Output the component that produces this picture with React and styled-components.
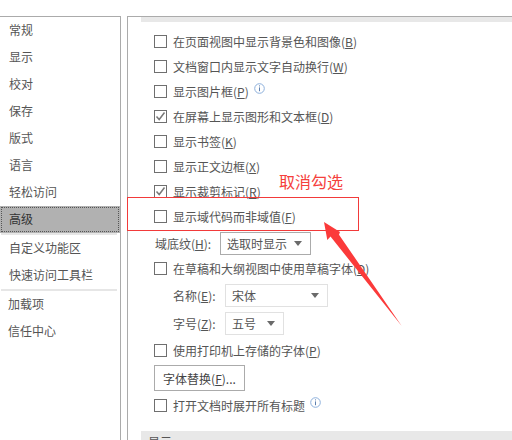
import React from "react";
import styled, {createGlobalStyle} from "styled-components";

const navGroups = [
  ["常规", "显示", "校对", "保存", "版式", "语言", "轻松访问", "高级"],
  ["自定义功能区", "快速访问工具栏"],
  ["加载项", "信任中心"]
];

const topOptions = [
  {label: "在页面视图中显示背景色和图像", hot: "B"},
  {label: "文档窗口内显示文字自动换行", hot: "W"},
  {label: "显示图片框", hot: "P", info: true},
  {label: "在屏幕上显示图形和文本框", hot: "D", checked: true},
  {label: "显示书签", hot: "K"},
  {label: "显示正文边框", hot: "X"},
  {label: "显示裁剪标记", hot: "R", checked: true},
  {label: "显示域代码而非域值", hot: "F"}
];

const App = () => (
  <Page>
    <GlobalStyle />
    <Sidebar>
      {navGroups.map((group, i) => (
        <NavGroup key={i} last={i === navGroups.length - 1}>
          {group.map(item => (
            <NavItem key={item} active={item === "高级"}>
              {item}
            </NavItem>
          ))}
        </NavGroup>
      ))}
    </Sidebar>
    <Main>
      <SectionBar />
      <Options>
        {topOptions.map(o => (
          <Option key={o.label} {...o} />
        ))}
        <SelectRow>
          <FieldLabel wide>
            域底纹(<u>H</u>):
          </FieldLabel>
          <Select width={91} dark>
            选取时显示
          </Select>
        </SelectRow>
        <Option label="在草稿和大纲视图中使用草稿字体" hot="D" />
        <SubRow first>
          <FieldLabel>
            名称(<u>E</u>):
          </FieldLabel>
          <Select width={103}>宋体</Select>
        </SubRow>
        <SubRow>
          <FieldLabel>
            字号(<u>Z</u>):
          </FieldLabel>
          <Select width={59}>五号</Select>
        </SubRow>
        <PrinterGap />
        <Option label="使用打印机上存储的字体" hot="P" />
        <PlainButton>
          字体替换(<u>F</u>)...
        </PlainButton>
        <Option label="打开文档时展开所有标题" info />
      </Options>
      <BottomBar>
        <BottomTitle>显示</BottomTitle>
      </BottomBar>
    </Main>

    <RedFrame />
    <Note>取消勾选</Note>
    <Arrow viewBox="0 0 90 115" aria-hidden="true">
      <path d="M1 2 L17 12 L16 14.7 L78.7 106 L7.5 16.5 L4.3 20 Z" fill="#fb3a3a" />
    </Arrow>
  </Page>
);

const Option = ({label, hot, checked, info}) => (
  <Row>
    <Box>
      {checked && (
        <svg width="11" height="11" viewBox="0 0 11 11">
          <path d="M1.5 5.5 L4.2 8.5 L9.5 1.5" fill="none" stroke="#777" strokeWidth="1.5" />
        </svg>
      )}
    </Box>
    <RowText>
      {label}
      {hot && (
        <>
          (<u>{hot}</u>)
        </>
      )}
    </RowText>
    {info && (
      <InfoIcon viewBox="0 0 11 11" aria-hidden="true">
        <circle cx="5.5" cy="5.5" r="4.8" fill="none" stroke="#8db0dc" />
        <rect x="5" y="2.4" width="1" height="1" fill="#5c7fae" />
        <rect x="5" y="4.4" width="1" height="3.8" fill="#5c7fae" />
      </InfoIcon>
    )}
  </Row>
);

const Select = ({width, dark, children}) => (
  <SelectBox style={{width}} dark={dark}>
    <span>{children}</span>
    <Caret />
  </SelectBox>
);

export default App;

const GlobalStyle = createGlobalStyle`
  html, body {
    margin: 0;
    padding: 0;
    background: #fff;
    overflow: hidden;
  }
  u {
    text-underline-offset: 1px;
  }
`;

const Page = styled.div`
  position: relative;
  width: 512px;
  height: 440px;
  padding-top: 16px;
  box-sizing: border-box;
  display: flex;
  gap: 6px;
  overflow: hidden;
  font-family: "Noto Sans CJK SC", "Noto Sans", sans-serif;
  font-size: 12px;
  color: #555;
`;

const Sidebar = styled.nav`
  width: 121px;
  box-sizing: border-box;
  border-top: 1px solid #ababab;
  border-right: 1px solid #ababab;
`;

const NavGroup = styled.div`
  border-bottom: ${props => (props.last ? "none" : "2px solid #e6e6e6")};
  margin: ${props => (props.last ? "0" : "0 3px 0 1px")};
`;

const NavItem = styled.div`
  height: 27px;
  line-height: 25px;
  box-sizing: border-box;
  margin-right: ${props => (props.active ? "-3px" : "0")};
  margin-left: ${props => (props.active ? "-1px" : "0")};
  padding-left: ${props => (props.active ? "9px" : "8px")};
  background: ${props => (props.active ? "#b1b1b1" : "transparent")};
  color: ${props => (props.active ? "#333" : "#555")};
  outline: ${props => (props.active ? "1px dotted #555" : "none")};
  outline-offset: -2px;
`;

const Main = styled.main`
  flex: 1;
  border-top: 1px solid #ababab;
  border-left: 1px solid #ababab;
  padding-left: 13px;
  display: flex;
  flex-direction: column;
`;

const SectionBar = styled.div`
  height: 5px;
  background: #e8e8e8;
`;

const Options = styled.div`
  flex: 1;
  padding: 7px 0 0 13px;
  display: flex;
  flex-direction: column;
  align-items: flex-start;
`;

const Row = styled.div`
  height: 25px;
  display: flex;
  align-items: center;
  flex-shrink: 0;
`;

const Box = styled.span`
  width: 13px;
  height: 13px;
  box-sizing: border-box;
  border: 1px solid #6f6f6f;
  display: flex;
  align-items: center;
  justify-content: center;
  margin-right: 6px;
  background: #fff;
`;

const RowText = styled.span`
  white-space: nowrap;
  color: #555;
`;

const InfoIcon = styled.svg`
  width: 11px;
  height: 11px;
  margin: -6px 0 0 5px;
`;

const SelectRow = styled.div`
  display: flex;
  align-items: center;
  height: 23px;
  margin-top: 3px;
  margin-bottom: 1px;
`;

const SubRow = styled.div`
  display: flex;
  align-items: center;
  height: 23px;
  padding-left: 19px;
  margin-top: ${props => (props.first ? "3px" : "5px")};
`;

const PrinterGap = styled.div`
  height: 3px;
  flex-shrink: 0;
`;

const FieldLabel = styled.span`
  width: ${props => (props.wide ? "66px" : "52px")};
  padding-left: ${props => (props.wide ? "1px" : "0")};
  box-sizing: border-box;
  white-space: nowrap;
  color: #555;
`;

const SelectBox = styled.div`
  height: 23px;
  box-sizing: border-box;
  border: 1px solid ${props => (props.dark ? "#ababab" : "#e1e1e1")};
  padding: 0 8px 0 6px;
  display: flex;
  align-items: center;
  justify-content: space-between;
  color: #555;
`;

const Caret = styled.span`
  width: 0;
  height: 0;
  border-left: 4px solid transparent;
  border-right: 4px solid transparent;
  border-top: 5px solid #6a6a6a;
`;

const PlainButton = styled.button`
  width: 91px;
  height: 26px;
  margin-top: 2px;
  margin-bottom: 2px;
  padding: 0;
  border: 1px solid #ababab;
  background: #fff;
  font: inherit;
  color: #444;
  flex-shrink: 0;
`;

const BottomBar = styled.div`
  height: 9px;
  background: #e8e8e8;
  padding-left: 7px;
  overflow: hidden;
  flex-shrink: 0;
`;

const BottomTitle = styled.div`
  line-height: 22px;
  color: #555;
`;

const RedFrame = styled.div`
  position: absolute;
  left: 127px;
  top: 197px;
  width: 232px;
  height: 34px;
  box-sizing: border-box;
  border: 1px solid #f23a3a;
`;

const Note = styled.div`
  position: absolute;
  left: 279px;
  top: 169px;
  font-size: 16px;
  line-height: 24px;
  color: #f5403c;
`;

const Arrow = styled.svg`
  position: absolute;
  left: 323px;
  top: 220px;
  width: 90px;
  height: 115px;
`;
